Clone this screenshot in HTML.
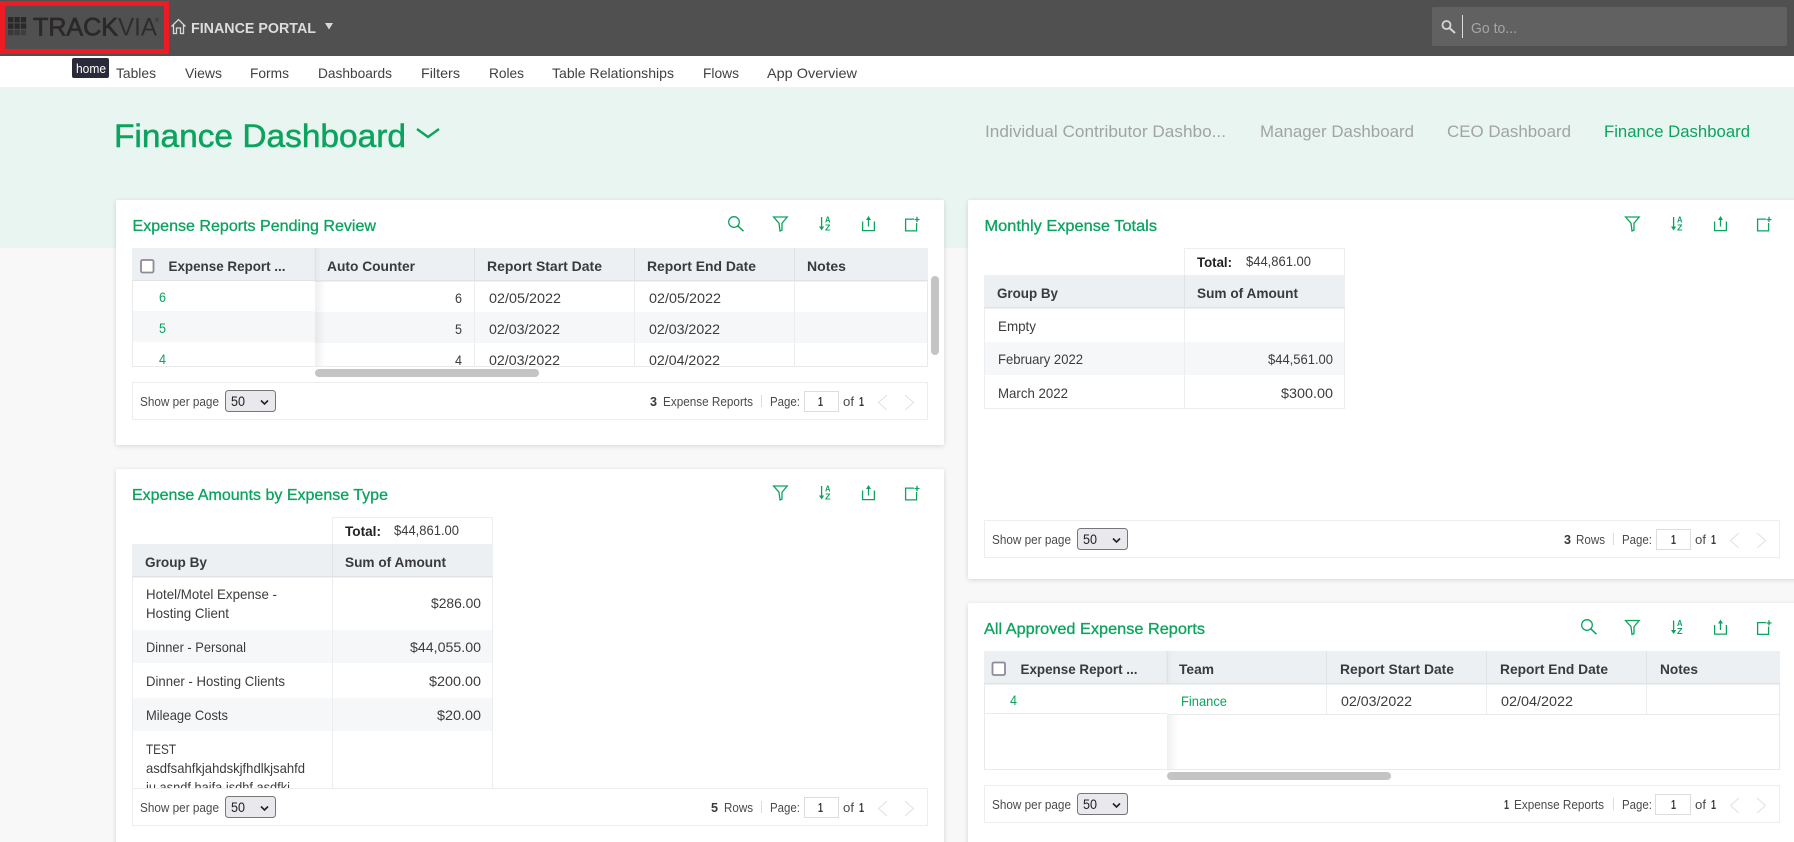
<!DOCTYPE html>
<html lang="en">
<head>
<meta charset="utf-8">
<title>Finance Dashboard</title>
<style>
html,body{margin:0;padding:0;width:1794px;height:842px;overflow:hidden;background:#f8f8f8}
svg{display:block;position:absolute;left:0;top:0}
text{font-family:"Liberation Sans",sans-serif;font-size:14px;fill:#3c3c3c}
.b{font-weight:700;fill:#3a3a3d;font-size:14px}
.g{fill:#0ca35f}
.nav{font-size:14px;fill:#404040}
.t{font-size:16px;fill:#0ca35f;stroke:#0ca35f;stroke-width:.3}
.tab{font-size:17px;fill:#a3a3a3}
.s{font-size:13px;fill:#4a4a4a}
.i{fill:none;stroke:#0ca35f;stroke-width:1.3}
.az{font-size:8px;font-weight:700;fill:#0ca35f}
.ln{stroke:#ebedf0;stroke-width:1;fill:none}
.pg{fill:#fff;stroke:#eeeeee}
.sel{fill:#e9e9ed;stroke:#767676}
.ch{fill:none;stroke:#e2e2e2;stroke-width:1.1}
.d{fill:none;stroke:#222;stroke-width:1.6}
</style>
</head>
<body>
<svg width="1794" height="842" viewBox="0 0 1794 842" xmlns="http://www.w3.org/2000/svg">
<defs>
<filter id="sh" x="-3%" y="-6%" width="106%" height="112%"><feDropShadow dx="0" dy="1" stdDeviation="2.5" flood-color="#000" flood-opacity=".14"/></filter>
<linearGradient id="fz" x1="0" x2="1" y1="0" y2="0"><stop offset="0" stop-color="#000" stop-opacity=".06"/><stop offset="1" stop-color="#000" stop-opacity="0"/></linearGradient>
<clipPath id="c1"><rect x="132" y="281" width="796" height="85"/></clipPath>
<clipPath id="c3"><rect x="132" y="577" width="362" height="211"/></clipPath>
<g id="isearch" class="i"><circle cx="6" cy="6" r="5.3"/><path d="M9.8 9.8L15.5 15.2" stroke-width="1.5"/></g>
<g id="ifilter" class="i"><path d="M.6 1H14.2L9 7.2V14.2L7 15L6 7.2Z"/></g>
<g id="isort"><path d="M2.6 0V11" class="i"/><path d="M0 9.5H5.2L2.6 13.5Z" fill="#0ca35f"/></g>
<g id="ishare"><path d="M.6 5.5V14.6H12.4V5.5" class="i"/><path d="M6.5 3V10.5" class="i"/><path d="M4 4L6.5 0L9 4Z" fill="#0ca35f"/></g>
<g id="iadd" class="i"><path d="M9 2.6H.6V14.4H11.6V6.5"/><path d="M9.5 3H14.5M12 .2V5.5" stroke-width="1.3"/></g>
</defs>

<!-- page backgrounds -->
<rect x="0" y="87" width="1794" height="161" fill="#e9f5f1"/>
<rect x="0" y="248" width="1794" height="594" fill="#f8f8f8"/>

<!-- header -->
<rect x="0" y="0" width="1794" height="56" fill="#505050"/>
<rect x="2.500" y="3.500" width="164" height="48" fill="none" stroke="#ed1c24" stroke-width="5"/>
<g fill="#2b2829">
<rect x="8" y="17" width="5.400" height="5.400"/><rect x="14.400" y="17" width="5.400" height="5.400"/><rect x="20.800" y="17" width="5.400" height="5.400"/>
<rect x="8" y="23.400" width="5.400" height="5.400"/><rect x="14.400" y="23.400" width="5.400" height="5.400"/><rect x="20.800" y="23.400" width="5.400" height="5.400"/>
<rect x="8" y="29.800" width="5.400" height="5.400" opacity=".6"/><rect x="14.400" y="29.800" width="5.400" height="5.400" opacity=".55"/><rect x="20.800" y="29.800" width="5.400" height="5.400" opacity=".45"/>
</g>
<text x="33" y="35.500" textLength="85" lengthAdjust="spacingAndGlyphs" style="font-size:25px;fill:#2b2829;stroke:#2b2829;stroke-width:.7">TRACK</text>
<text x="118" y="35.500" textLength="39" lengthAdjust="spacingAndGlyphs" style="font-size:25px;fill:#2f2c2d">VIA</text>
<text x="155" y="22" style="font-size:5px;fill:#2b2829">®</text>
<path d="M171.500 26.500L178.500 19.500L185.500 26.500M173.500 25V33.500H176.500V28H180.500V33.500H183.500V25" fill="none" stroke="#d9d9d9" stroke-width="1.300"/>
<text x="191" y="33" textLength="125" lengthAdjust="spacingAndGlyphs" style="font-size:14.500px;font-weight:700;fill:#dcdcdc">FINANCE PORTAL</text>
<path d="M325 23H333L329 29.500Z" fill="#d8d8d8"/>
<rect x="1432" y="7" width="355" height="39" rx="2" fill="#616161"/>
<circle cx="1446.500" cy="25" r="4" fill="none" stroke="#d6d6d6" stroke-width="1.800"/><path d="M1449.500 28L1455 33" stroke="#d6d6d6" stroke-width="2"/>
<rect x="1462" y="15" width="1" height="23" fill="#dddddd"/>
<text x="1471" y="33" textLength="46" lengthAdjust="spacingAndGlyphs" style="font-size:15px;fill:#a6a6a6">Go to...</text>

<!-- nav -->
<rect x="0" y="56" width="1794" height="31" fill="#ffffff"/>
<text class="nav" x="116" y="78" textLength="40" lengthAdjust="spacingAndGlyphs">Tables</text>
<text class="nav" x="185" y="78" textLength="37" lengthAdjust="spacingAndGlyphs">Views</text>
<text class="nav" x="250" y="78" textLength="39" lengthAdjust="spacingAndGlyphs">Forms</text>
<text class="nav" x="318" y="78" textLength="74" lengthAdjust="spacingAndGlyphs">Dashboards</text>
<text class="nav" x="421" y="78" textLength="39" lengthAdjust="spacingAndGlyphs">Filters</text>
<text class="nav" x="489" y="78" textLength="35" lengthAdjust="spacingAndGlyphs">Roles</text>
<text class="nav" x="552" y="78" textLength="122" lengthAdjust="spacingAndGlyphs">Table Relationships</text>
<text class="nav" x="703" y="78" textLength="36" lengthAdjust="spacingAndGlyphs">Flows</text>
<text class="nav" x="767" y="78" textLength="90" lengthAdjust="spacingAndGlyphs">App Overview</text>
<rect x="72" y="58" width="37" height="20" rx="2" fill="#2a2a3a"/>
<text x="76" y="73" textLength="30" lengthAdjust="spacingAndGlyphs" style="font-size:13px;fill:#fff">home</text>

<!-- title -->
<text x="114" y="147" textLength="292" lengthAdjust="spacingAndGlyphs" style="font-size:32px;fill:#0ca35f;stroke:#0ca35f;stroke-width:.5">Finance Dashboard</text>
<path d="M417 129L428 137L439 129" fill="none" stroke="#0ca35f" stroke-width="2.400"/>
<text class="tab" x="985" y="137" textLength="241" lengthAdjust="spacingAndGlyphs">Individual Contributor Dashbo...</text>
<text class="tab" x="1260" y="137" textLength="154" lengthAdjust="spacingAndGlyphs">Manager Dashboard</text>
<text class="tab" x="1447" y="137" textLength="124" lengthAdjust="spacingAndGlyphs">CEO Dashboard</text>
<text class="tab g" x="1604" y="137" textLength="146" lengthAdjust="spacingAndGlyphs" style="fill:#0ca35f">Finance Dashboard</text>

<!-- panels -->
<rect x="116" y="200" width="828" height="245" rx="2" fill="#fff" filter="url(#sh)"/>
<rect x="968" y="200" width="840" height="379" rx="2" fill="#fff" filter="url(#sh)"/>
<rect x="116" y="469" width="828" height="400" rx="2" fill="#fff" filter="url(#sh)"/>
<rect x="968" y="603" width="840" height="270" rx="2" fill="#fff" filter="url(#sh)"/>

<!-- PANEL 1 -->
<text class="t" x="132.500" y="231" textLength="243.500" lengthAdjust="spacingAndGlyphs">Expense Reports Pending Review</text>
<use href="#isearch" x="728" y="216"/><use href="#ifilter" x="773" y="216"/>
<use href="#isort" x="819" y="217"/><text class="az" x="825" y="222.500" textLength="5.500" lengthAdjust="spacingAndGlyphs">A</text><text class="az" x="825" y="230.500" textLength="5.500" lengthAdjust="spacingAndGlyphs">Z</text>
<use href="#ishare" x="862" y="216"/><use href="#iadd" x="905" y="216.500"/>

<rect x="132" y="248" width="796" height="33" fill="#ecf0f3"/>
<rect x="132" y="280" width="796" height="1.500" fill="#dfe3e7"/>
<rect x="132" y="312" width="796" height="31" fill="#f6f7f9"/>
<g clip-path="url(#c1)"><path class="ln" d="M474.500 281V366M634.500 281V366M794.500 281V366"/>
<rect x="315" y="281" width="11" height="85" fill="url(#fz)"/>
<rect x="132" y="281" width="182" height="30" fill="#fff"/><rect x="132" y="311" width="182" height="31" fill="#f6f7f9"/><rect x="132" y="342" width="182" height="24" fill="#fff"/>
<text class="g" x="159" y="302" textLength="7" lengthAdjust="spacingAndGlyphs" style="fill:#0ca35f">6</text>
<text class="g" x="159" y="333" textLength="7" lengthAdjust="spacingAndGlyphs" style="fill:#0ca35f">5</text>
<text class="g" x="159" y="364" textLength="7" lengthAdjust="spacingAndGlyphs" style="fill:#0ca35f">4</text>
<text x="455" y="303" textLength="7" lengthAdjust="spacingAndGlyphs">6</text>
<text x="455" y="334" textLength="7" lengthAdjust="spacingAndGlyphs">5</text>
<text x="455" y="365" textLength="7" lengthAdjust="spacingAndGlyphs">4</text>
<text x="489" y="303" textLength="72" lengthAdjust="spacingAndGlyphs">02/05/2022</text>
<text x="489" y="334" textLength="71" lengthAdjust="spacingAndGlyphs">02/03/2022</text>
<text x="489" y="365" textLength="71" lengthAdjust="spacingAndGlyphs">02/03/2022</text>
<text x="649" y="303" textLength="72" lengthAdjust="spacingAndGlyphs">02/05/2022</text>
<text x="649" y="334" textLength="71" lengthAdjust="spacingAndGlyphs">02/03/2022</text>
<text x="649" y="365" textLength="71" lengthAdjust="spacingAndGlyphs">02/04/2022</text>
</g>
<path d="M132.500 281V366.500H927.500V281" fill="none" stroke="#e9eaec"/>
<path d="M315 248V281" stroke="#dfe3e7" stroke-width="1"/><rect x="315" y="248" width="6" height="32" fill="url(#fz)" opacity=".5"/>
<path d="M474.500 248V281M634.500 248V281M794.500 248V281" stroke="#dfe3e7"/>
<rect x="141" y="260" width="12.500" height="12.500" rx="1.500" fill="#fff" stroke="#8b8b99" stroke-width="1.800"/>
<text class="b" x="168.500" y="271" textLength="117" lengthAdjust="spacingAndGlyphs">Expense Report ...</text>
<text class="b" x="327" y="271" textLength="88" lengthAdjust="spacingAndGlyphs">Auto Counter</text>
<text class="b" x="487" y="271" textLength="115" lengthAdjust="spacingAndGlyphs">Report Start Date</text>
<text class="b" x="647" y="271" textLength="109" lengthAdjust="spacingAndGlyphs">Report End Date</text>
<text class="b" x="807" y="271" textLength="39" lengthAdjust="spacingAndGlyphs">Notes</text>
<rect x="315" y="369" width="224" height="8" rx="4" fill="#c4c4c4"/>
<rect x="931" y="276" width="8" height="79" rx="4" fill="#c4c4c4"/>

<rect class="pg" x="132.500" y="382.500" width="795" height="37"/>
<text class="s" x="140" y="406" textLength="79" lengthAdjust="spacingAndGlyphs">Show per page</text>
<rect class="sel" x="225.500" y="390.500" width="50" height="21" rx="3"/>
<text x="231" y="406" textLength="14" lengthAdjust="spacingAndGlyphs" style="fill:#222">50</text>
<path class="d" d="M261 400.500L264.500 404L268 400.500"/>
<text class="b" x="650" y="406" textLength="7" lengthAdjust="spacingAndGlyphs" style="font-size:13px">3</text>
<text class="s" x="663" y="406" textLength="90" lengthAdjust="spacingAndGlyphs">Expense Reports</text>
<rect x="761" y="395" width="1" height="12" fill="#dddddd"/>
<text class="s" x="770" y="406" textLength="30" lengthAdjust="spacingAndGlyphs">Page:</text>
<rect x="804.500" y="391.500" width="34" height="20" fill="#fff" stroke="#dddddd"/>
<text class="b" x="818" y="406" textLength="5" lengthAdjust="spacingAndGlyphs" style="font-size:13px">1</text>
<text class="s" x="843" y="406" textLength="11" lengthAdjust="spacingAndGlyphs">of</text>
<text class="b" x="859" y="406" textLength="5" lengthAdjust="spacingAndGlyphs" style="font-size:13px">1</text>
<path class="ch" d="M887 395L878.500 402.500L887 410M905 395L913.500 402.500L905 410"/>

<!-- PANEL 2 -->
<text class="t" x="984.500" y="231" textLength="172.500" lengthAdjust="spacingAndGlyphs">Monthly Expense Totals</text>
<use href="#ifilter" x="1625" y="216"/>
<use href="#isort" x="1671" y="217"/><text class="az" x="1677" y="222.500" textLength="5.500" lengthAdjust="spacingAndGlyphs">A</text><text class="az" x="1677" y="230.500" textLength="5.500" lengthAdjust="spacingAndGlyphs">Z</text>
<use href="#ishare" x="1714" y="216"/><use href="#iadd" x="1757" y="216.500"/>

<rect x="1184.500" y="248.500" width="160" height="27" fill="#fff" stroke="#eeeeee"/>
<text class="b" x="1197" y="267" textLength="35" lengthAdjust="spacingAndGlyphs" style="fill:#222">Total:</text>
<text x="1246" y="266" textLength="65" lengthAdjust="spacingAndGlyphs">$44,861.00</text>
<rect x="984" y="275" width="361" height="32" fill="#ecf0f3"/>
<rect x="984" y="307" width="361" height="1.500" fill="#dfe3e7"/>
<path d="M1184.500 275V307" stroke="#dfe3e7"/>
<text class="b" x="997" y="298" textLength="61" lengthAdjust="spacingAndGlyphs">Group By</text>
<text class="b" x="1197" y="298" textLength="101" lengthAdjust="spacingAndGlyphs">Sum of Amount</text>
<rect x="984" y="342" width="361" height="33" fill="#f6f7f9"/>
<path class="ln" d="M984.500 308V408.500H1344.500V308M1184.500 308V408"/>
<text x="998" y="331" textLength="38" lengthAdjust="spacingAndGlyphs">Empty</text>
<text x="998" y="364" textLength="85" lengthAdjust="spacingAndGlyphs">February 2022</text>
<text x="998" y="398" textLength="70" lengthAdjust="spacingAndGlyphs">March 2022</text>
<text x="1268" y="364" textLength="65" lengthAdjust="spacingAndGlyphs">$44,561.00</text>
<text x="1281" y="398" textLength="52" lengthAdjust="spacingAndGlyphs">$300.00</text>

<rect class="pg" x="984.500" y="520.500" width="795" height="37"/>
<text class="s" x="992" y="544" textLength="79" lengthAdjust="spacingAndGlyphs">Show per page</text>
<rect class="sel" x="1077.500" y="528.500" width="50" height="21" rx="3"/>
<text x="1083" y="544" textLength="14" lengthAdjust="spacingAndGlyphs" style="fill:#222">50</text>
<path class="d" d="M1113 538.500L1116.500 542L1120 538.500"/>
<text class="b" x="1564" y="544" textLength="7" lengthAdjust="spacingAndGlyphs" style="font-size:13px">3</text>
<text class="s" x="1576" y="544" textLength="29" lengthAdjust="spacingAndGlyphs">Rows</text>
<rect x="1613" y="533" width="1" height="12" fill="#dddddd"/>
<text class="s" x="1622" y="544" textLength="30" lengthAdjust="spacingAndGlyphs">Page:</text>
<rect x="1656.500" y="529.500" width="34" height="20" fill="#fff" stroke="#dddddd"/>
<text class="b" x="1671" y="544" textLength="5" lengthAdjust="spacingAndGlyphs" style="font-size:13px">1</text>
<text class="s" x="1695" y="544" textLength="11" lengthAdjust="spacingAndGlyphs">of</text>
<text class="b" x="1711" y="544" textLength="5" lengthAdjust="spacingAndGlyphs" style="font-size:13px">1</text>
<path class="ch" d="M1739 533L1730.500 540.500L1739 548M1757 533L1765.500 540.500L1757 548"/>

<!-- PANEL 3 -->
<text class="t" x="132" y="500" textLength="256" lengthAdjust="spacingAndGlyphs">Expense Amounts by Expense Type</text>
<use href="#ifilter" x="773" y="485"/>
<use href="#isort" x="819" y="486"/><text class="az" x="825" y="491.500" textLength="5.500" lengthAdjust="spacingAndGlyphs">A</text><text class="az" x="825" y="499.500" textLength="5.500" lengthAdjust="spacingAndGlyphs">Z</text>
<use href="#ishare" x="862" y="485"/><use href="#iadd" x="905" y="485.500"/>

<rect x="332.500" y="517.500" width="160" height="27" fill="#fff" stroke="#eeeeee"/>
<text class="b" x="345" y="536" textLength="36" lengthAdjust="spacingAndGlyphs" style="fill:#222">Total:</text>
<text x="394" y="535" textLength="65" lengthAdjust="spacingAndGlyphs">$44,861.00</text>
<rect x="132" y="544" width="361" height="33" fill="#ecf0f3"/>
<rect x="132" y="576" width="361" height="1.500" fill="#dfe3e7"/>
<path d="M332.500 544V577" stroke="#dfe3e7"/>
<text class="b" x="145" y="567" textLength="62" lengthAdjust="spacingAndGlyphs">Group By</text>
<text class="b" x="345" y="567" textLength="101" lengthAdjust="spacingAndGlyphs">Sum of Amount</text>
<rect x="132" y="630" width="361" height="33" fill="#f6f7f9"/>
<rect x="132" y="698" width="361" height="33" fill="#f6f7f9"/>
<path class="ln" d="M132.500 577V788M492.500 577V788M332.500 577V788"/>
<g clip-path="url(#c3)">
<text x="146" y="599" textLength="131" lengthAdjust="spacingAndGlyphs">Hotel/Motel Expense -</text>
<text x="146" y="618" textLength="83" lengthAdjust="spacingAndGlyphs">Hosting Client</text>
<text x="431" y="608" textLength="50" lengthAdjust="spacingAndGlyphs">$286.00</text>
<text x="146" y="652" textLength="100" lengthAdjust="spacingAndGlyphs">Dinner - Personal</text>
<text x="410" y="652" textLength="71" lengthAdjust="spacingAndGlyphs">$44,055.00</text>
<text x="146" y="686" textLength="139" lengthAdjust="spacingAndGlyphs">Dinner - Hosting Clients</text>
<text x="429" y="686" textLength="52" lengthAdjust="spacingAndGlyphs">$200.00</text>
<text x="146" y="720" textLength="82" lengthAdjust="spacingAndGlyphs">Mileage Costs</text>
<text x="437" y="720" textLength="44" lengthAdjust="spacingAndGlyphs">$20.00</text>
<text x="146" y="754" textLength="30" lengthAdjust="spacingAndGlyphs">TEST</text>
<text x="146" y="773" textLength="159" lengthAdjust="spacingAndGlyphs">asdfsahfkjahdskjfhdlkjsahfd</text>
<text x="146" y="792" textLength="144" lengthAdjust="spacingAndGlyphs">ju asndf haifa jsdhf asdfkj</text>
</g>

<rect class="pg" x="132.500" y="788.500" width="795" height="37"/>
<text class="s" x="140" y="812" textLength="79" lengthAdjust="spacingAndGlyphs">Show per page</text>
<rect class="sel" x="225.500" y="796.500" width="50" height="21" rx="3"/>
<text x="231" y="812" textLength="14" lengthAdjust="spacingAndGlyphs" style="fill:#222">50</text>
<path class="d" d="M261 806.500L264.500 810L268 806.500"/>
<text class="b" x="711" y="812" textLength="7" lengthAdjust="spacingAndGlyphs" style="font-size:13px">5</text>
<text class="s" x="724" y="812" textLength="29" lengthAdjust="spacingAndGlyphs">Rows</text>
<rect x="761" y="801" width="1" height="12" fill="#dddddd"/>
<text class="s" x="770" y="812" textLength="30" lengthAdjust="spacingAndGlyphs">Page:</text>
<rect x="804.500" y="797.500" width="34" height="20" fill="#fff" stroke="#dddddd"/>
<text class="b" x="818" y="812" textLength="5" lengthAdjust="spacingAndGlyphs" style="font-size:13px">1</text>
<text class="s" x="843" y="812" textLength="11" lengthAdjust="spacingAndGlyphs">of</text>
<text class="b" x="859" y="812" textLength="5" lengthAdjust="spacingAndGlyphs" style="font-size:13px">1</text>
<path class="ch" d="M887 801L878.500 808.500L887 816M905 801L913.500 808.500L905 816"/>

<!-- PANEL 4 -->
<text class="t" x="984" y="634" textLength="221" lengthAdjust="spacingAndGlyphs">All Approved Expense Reports</text>
<use href="#isearch" x="1581" y="619"/><use href="#ifilter" x="1625" y="619.500"/>
<use href="#isort" x="1671" y="620.500"/><text class="az" x="1677" y="626" textLength="5.500" lengthAdjust="spacingAndGlyphs">A</text><text class="az" x="1677" y="634" textLength="5.500" lengthAdjust="spacingAndGlyphs">Z</text>
<use href="#ishare" x="1714" y="619.500"/><use href="#iadd" x="1757" y="620"/>

<rect x="984" y="651" width="796" height="32" fill="#ecf0f3"/>
<rect x="984" y="683" width="796" height="1.500" fill="#dfe3e7"/>
<path d="M1167 651V683M1326.500 651V683M1486.500 651V683M1646.500 651V683" stroke="#dfe3e7"/>
<rect x="1167" y="651" width="6" height="32" fill="url(#fz)" opacity=".5"/>
<rect x="1167" y="714" width="11" height="55" fill="url(#fz)"/>
<path class="ln" d="M1326.500 684V714M1486.500 684V714M1646.500 684V714"/>
<path d="M1167 714.500H1780M984 713.500H1167" stroke="#e9eaec"/>
<path d="M984.500 684V769.500H1779.500V684" fill="none" stroke="#e9eaec"/>
<rect x="992.500" y="662.500" width="12.500" height="12.500" rx="1.500" fill="#fff" stroke="#8b8b99" stroke-width="1.800"/>
<text class="b" x="1020.500" y="674" textLength="117" lengthAdjust="spacingAndGlyphs">Expense Report ...</text>
<text class="b" x="1179" y="674" textLength="35" lengthAdjust="spacingAndGlyphs">Team</text>
<text class="b" x="1340" y="674" textLength="114" lengthAdjust="spacingAndGlyphs">Report Start Date</text>
<text class="b" x="1500" y="674" textLength="108" lengthAdjust="spacingAndGlyphs">Report End Date</text>
<text class="b" x="1660" y="674" textLength="38" lengthAdjust="spacingAndGlyphs">Notes</text>
<text x="1010" y="705" textLength="7" lengthAdjust="spacingAndGlyphs" style="fill:#0ca35f">4</text>
<text x="1181" y="706" textLength="46" lengthAdjust="spacingAndGlyphs" style="fill:#0ca35f">Finance</text>
<text x="1341" y="706" textLength="71" lengthAdjust="spacingAndGlyphs">02/03/2022</text>
<text x="1501" y="706" textLength="72" lengthAdjust="spacingAndGlyphs">02/04/2022</text>
<rect x="1167" y="772" width="224" height="8" rx="4" fill="#c4c4c4"/>

<rect class="pg" x="984.500" y="785.500" width="795" height="37"/>
<text class="s" x="992" y="809" textLength="79" lengthAdjust="spacingAndGlyphs">Show per page</text>
<rect class="sel" x="1077.500" y="793.500" width="50" height="21" rx="3"/>
<text x="1083" y="809" textLength="14" lengthAdjust="spacingAndGlyphs" style="fill:#222">50</text>
<path class="d" d="M1113 803.500L1116.500 807L1120 803.500"/>
<text class="b" x="1504" y="809" textLength="5" lengthAdjust="spacingAndGlyphs" style="font-size:13px">1</text>
<text class="s" x="1514" y="809" textLength="90" lengthAdjust="spacingAndGlyphs">Expense Reports</text>
<rect x="1613" y="798" width="1" height="12" fill="#dddddd"/>
<text class="s" x="1622" y="809" textLength="30" lengthAdjust="spacingAndGlyphs">Page:</text>
<rect x="1655.500" y="794.500" width="35" height="20" fill="#fff" stroke="#dddddd"/>
<text class="b" x="1671" y="809" textLength="5" lengthAdjust="spacingAndGlyphs" style="font-size:13px">1</text>
<text class="s" x="1695" y="809" textLength="11" lengthAdjust="spacingAndGlyphs">of</text>
<text class="b" x="1711" y="809" textLength="5" lengthAdjust="spacingAndGlyphs" style="font-size:13px">1</text>
<path class="ch" d="M1739 798L1730.500 805.500L1739 813M1757 798L1765.500 805.500L1757 813"/>
</svg>
</body>
</html>
